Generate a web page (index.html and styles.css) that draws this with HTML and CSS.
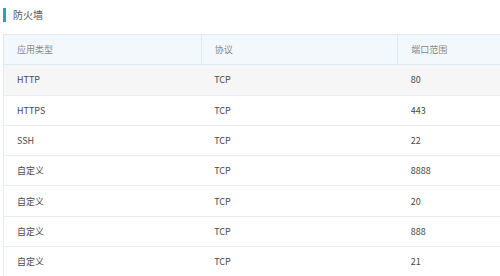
FILE: index.html
```html
<!DOCTYPE html>
<html>
<head>
<meta charset="utf-8">
<link rel="stylesheet" href="styles.css">
</head>
<body>
<div class="page">
  <div class="title"><span class="title-bar"></span><span class="title-text">防火墙</span></div>
  <div class="table-wrap">
  <table class="fw-table">
    <thead>
      <tr><th>应用类型</th><th>协议</th><th>端口范围</th></tr>
    </thead>
    <tbody>
      <tr class="hover"><td>HTTP</td><td>TCP</td><td>80</td></tr>
      <tr><td>HTTPS</td><td>TCP</td><td>443</td></tr>
      <tr><td>SSH</td><td>TCP</td><td>22</td></tr>
      <tr><td>自定义</td><td>TCP</td><td>8888</td></tr>
      <tr><td>自定义</td><td>TCP</td><td>20</td></tr>
      <tr><td>自定义</td><td>TCP</td><td>888</td></tr>
      <tr><td>自定义</td><td>TCP</td><td>21</td></tr>
    </tbody>
  </table>
  </div>
</div>
</body>
</html>
```
FILE: styles.css
```css
html, body {
  margin: 0;
  padding: 0;
  background: #fff;
  overflow: hidden;
}
body {
  font-family: "Noto Sans CJK SC", "Noto Sans", sans-serif;
  color: #555;
}
.page {
  padding: 8px 0 0 3px;
}
.title {
  display: flex;
  align-items: center;
  height: 14px;
  gap: 7px;
}
.title-bar {
  width: 3px;
  height: 14px;
  background: #20a8b8;
}
.title-text {
  font-size: 10px;
  color: #555;
  line-height: 14px;
}
.table-wrap {
  margin-top: 12px;
  overflow: hidden;
}
.fw-table {
  border-collapse: collapse;
  table-layout: fixed;
  width: 592px;
  font-size: 9px;
}
.fw-table th,
.fw-table td {
  height: 30.3px;
  padding: 0 0 0 13px;
  text-align: left;
  border-bottom: 1px solid #e9edf1;
  box-sizing: border-box;
}
.fw-table th {
  width: 197px;
  background: #f3f8fd;
  font-weight: normal;
  color: #888;
  border: 1px solid #dde9f3;
}
.fw-table th + th { width: 196px; }
.fw-table td {
  color: #4a4a4a;
}
.fw-table td:first-child {
  border-left: 1px solid #e6eaee;
}
.fw-table tr.hover td {
  background: #f6f6f7;
}
```
